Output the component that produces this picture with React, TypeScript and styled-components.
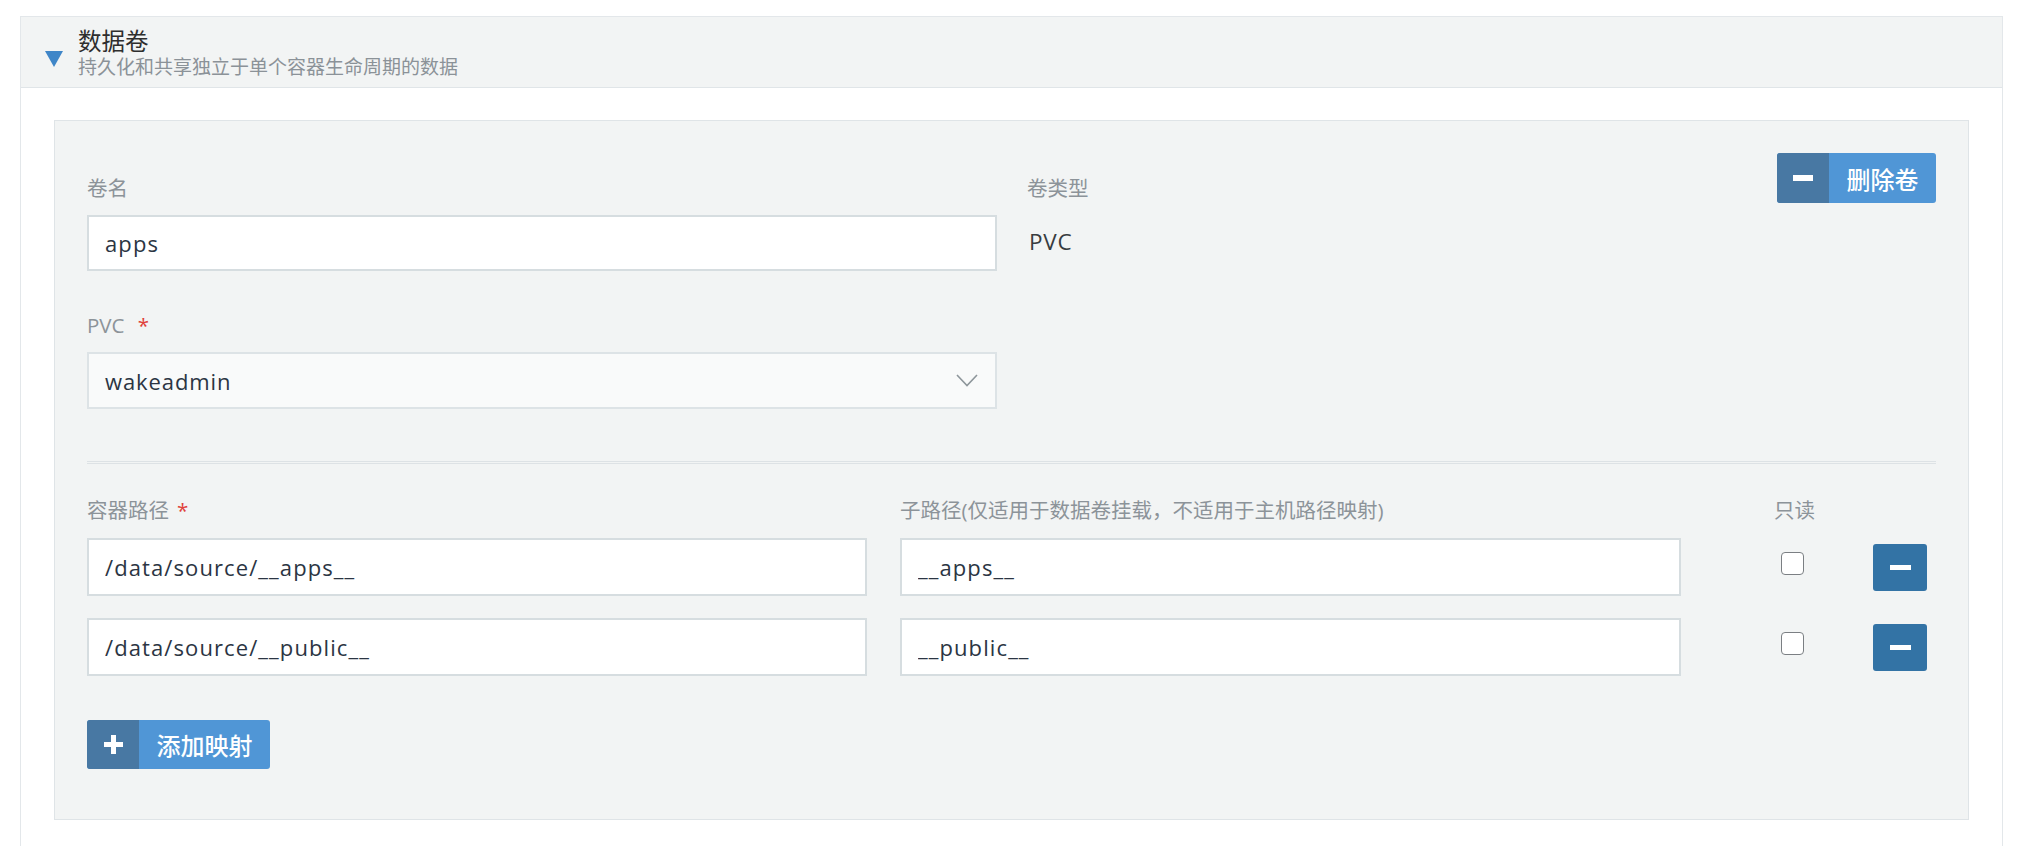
import styled, { createGlobalStyle } from "styled-components";

const GlobalStyle = createGlobalStyle`
    body {
        margin: 0;
        background: #fff;
        font-family: "Open Sans", "Noto Sans CJK SC", sans-serif;
    }
    * { box-sizing: border-box; }
`

const mounts = [
    { path: '/data/source/__apps__', sub: '__apps__' },
    { path: '/data/source/__public__', sub: '__public__' },
]

const App = () => {
    return (
        <Page>
            <GlobalStyle />
            <Section>
                <SectionHeader>
                    <Toggle width="18" height="16" viewBox="0 0 18 16">
                        <polygon points="0,0 18,0 9,16" fill="#3f86c8" />
                    </Toggle>
                    <div>
                        <Title>数据卷</Title>
                        <Subtitle>持久化和共享独立于单个容器生命周期的数据</Subtitle>
                    </div>
                </SectionHeader>

                <SectionBody>
                    <VolumePanel>
                        <TopGrid>
                            <div>
                                <Field>
                                    <Label>卷名</Label>
                                    <TextInput defaultValue="apps" />
                                </Field>
                                <Field gap="41px">
                                    <Label>PVC <Required>*</Required></Label>
                                    <SelectBox>
                                        <span>wakeadmin</span>
                                        <svg width="22" height="13" viewBox="0 0 22 13">
                                            <polyline points="1,1 11,11.5 21,1" fill="none" stroke="#8e969b" strokeWidth="1.6" />
                                        </svg>
                                    </SelectBox>
                                </Field>
                            </div>
                            <TypeCol>
                                <Field>
                                    <Label>卷类型</Label>
                                    <StaticValue>PVC</StaticValue>
                                </Field>
                                <SplitButton width="159px" height="50px">
                                    <IconPart><MinusBar /></IconPart>
                                    <TextPart>删除卷</TextPart>
                                </SplitButton>
                            </TypeCol>
                        </TopGrid>

                        <Divider />

                        <MountGrid>
                            <Label>容器路径<Required>*</Required></Label>
                            <Label>子路径(仅适用于数据卷挂载，不适用于主机路径映射)</Label>
                            <ReadonlyCell><Label>只读</Label></ReadonlyCell>
                            <span />
                        </MountGrid>
                        {mounts.map((m) => (
                            <MountRow key={m.path}>
                                <TextInput defaultValue={m.path} height="58px" />
                                <TextInput defaultValue={m.sub} height="58px" />
                                <ReadonlyCell><Checkbox /></ReadonlyCell>
                                <RemoveButton><MinusBar small /></RemoveButton>
                            </MountRow>
                        ))}

                        <AddRow>
                            <SplitButton width="183px" height="49px">
                                <IconPart><PlusMark /></IconPart>
                                <TextPart>添加映射</TextPart>
                            </SplitButton>
                        </AddRow>
                    </VolumePanel>
                </SectionBody>
            </Section>
        </Page>
    );
}

export default App;

const Page = styled.div`
    padding: 16px 19px 0 20px;
`

const Section = styled.section`
    border: 1px solid #e3e7ea;
    border-bottom: none;
    min-height: 900px;
`

const SectionHeader = styled.div`
    height: 71px;
    background: #f2f4f4;
    border-bottom: 1px solid #e0e5e8;
    display: flex;
    align-items: center;
    padding-left: 24px;
    gap: 15px;
`

const Toggle = styled.svg`
    margin-top: 14px;
    flex-shrink: 0;
`

const Title = styled.div`
    font-size: 23.5px;
    line-height: 28px;
    color: #2e2e2e;
    margin-top: 1px;
`

const Subtitle = styled.div`
    font-size: 19px;
    line-height: 24px;
    color: #8b9298;
`

const SectionBody = styled.div`
    padding: 32px 33px 0 33px;
`

const VolumePanel = styled.div`
    background: #f2f4f4;
    border: 1px solid #dfe4e7;
    padding: 32px 32px 50px 32px;
`

const TopGrid = styled.div`
    display: grid;
    grid-template-columns: 910px 1fr;
    column-gap: 30px;
`

const TypeCol = styled.div`
    display: flex;
    justify-content: space-between;
    align-items: flex-start;
`

const Field = styled.div<{ gap?: string }>`
    margin-top: ${({ gap }) => gap || '22px'};
    display: flex;
    flex-direction: column;
    gap: 14px;
`

const Label = styled.div`
    font-size: 20.5px;
    line-height: 26px;
    color: #8c9399;
    white-space: nowrap;
`

const Required = styled.span`
    color: #e0403a;
    margin-left: 8px;
`

const TextInput = styled.input<{ height?: string }>`
    display: block;
    width: 100%;
    height: ${({ height }) => height || '56px'};
    border: 2px solid #d6dde0;
    background: #fff;
    padding: 0 16px;
    font-family: "Open Sans", "Noto Sans CJK SC", sans-serif;
    font-size: 22px;
    letter-spacing: 1.1px;
    color: #2b3543;
    outline: none;
`

const SelectBox = styled.div`
    height: 57px;
    border: 2px solid #dde3e6;
    background: #f9fafa;
    padding: 0 17px 0 16px;
    display: flex;
    align-items: center;
    justify-content: space-between;
    font-size: 22px;
    letter-spacing: 0.9px;
    color: #2b3543;
`

const StaticValue = styled.div`
    height: 56px;
    line-height: 54px;
    font-size: 22.5px;
    letter-spacing: 0.8px;
    color: #383c40;
    padding-left: 2px;
`

const SplitButton = styled.button<{ width: string, height: string }>`
    display: flex;
    width: ${({ width }) => width};
    height: ${({ height }) => height};
    padding: 0;
    border: none;
    border-radius: 3px;
    overflow: hidden;
    background: #5096d6;
    cursor: pointer;
`

const IconPart = styled.span`
    width: 52px;
    height: 100%;
    background: #4878a3;
    display: flex;
    align-items: center;
    justify-content: center;
`

const TextPart = styled.span`
    flex: 1;
    display: flex;
    align-items: center;
    justify-content: center;
    color: #fff;
    font-family: "Open Sans", "Noto Sans CJK SC", sans-serif;
    font-size: 24px;
    font-weight: 500;
`

const MinusBar = styled.span<{ small?: boolean }>`
    display: block;
    width: ${({ small }) => small ? '21px' : '20px'};
    height: ${({ small }) => small ? '5px' : '6px'};
    background: #fff;
`

const PlusMark = styled.span`
    position: relative;
    width: 19px;
    height: 19px;
    &::before, &::after {
        content: "";
        position: absolute;
        background: #fff;
    }
    &::before { left: 0; top: 7px; width: 19px; height: 5px; }
    &::after { left: 7px; top: 0; width: 5px; height: 19px; }
`

const Divider = styled.div`
    margin-top: 52px;
    height: 3px;
    border-top: 1px solid #dde2e5;
    border-bottom: 1px solid #dde2e5;
`

const MountGrid = styled.div`
    display: grid;
    grid-template-columns: 780px 781px 126px 54px;
    column-gap: 33px;
    margin-top: 33px;
    margin-bottom: 15px;
`

const MountRow = styled(MountGrid)`
    align-items: center;
    margin-top: 0;
    margin-bottom: 22px;
`

const ReadonlyCell = styled.div`
    padding-left: 60px;
    width: 100%;
    display: flex;
    align-items: center;
`

const Checkbox = styled.span`
    display: block;
    width: 23px;
    height: 23px;
    margin-left: 7px;
    margin-top: -8px;
    border: 1.5px solid #7b7f83;
    border-radius: 4px;
    background: #fff;
`

const RemoveButton = styled.button`
    width: 54px;
    height: 47px;
    border: none;
    border-radius: 3px;
    background: #3373a5;
    display: flex;
    align-items: center;
    justify-content: center;
    padding: 0;
    cursor: pointer;
`

const AddRow = styled.div`
    margin-top: 44px;
`
